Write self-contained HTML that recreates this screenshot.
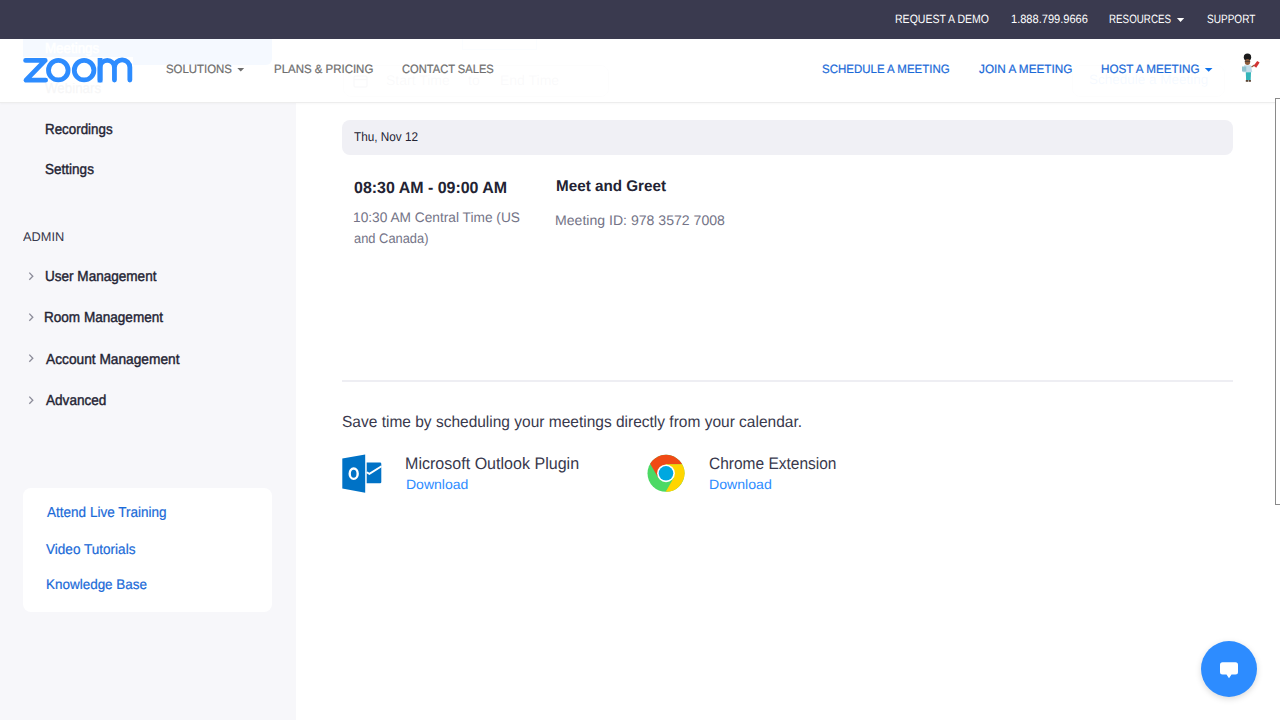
<!DOCTYPE html>
<html><head><meta charset="utf-8">
<style>
html,body{margin:0;padding:0;width:1280px;height:720px;overflow:hidden;background:#fff;font-family:"Liberation Sans",sans-serif;}
.a{position:absolute;white-space:nowrap;line-height:1;text-rendering:geometricPrecision;}
#side{position:absolute;left:0;top:0;width:295.5px;height:720px;background:#f7f7fa;}
#topbar{position:absolute;left:0;top:0;width:1280px;height:39px;background:#3a3a4f;}
#hdr{position:absolute;left:0;top:39px;width:1280px;height:63px;background:rgba(255,255,255,0.96);border-bottom:1px solid rgba(0,0,0,0.07);box-shadow:0 1px 2px rgba(0,0,0,0.03);}
.tb{color:#fff;font-size:12px;}
.nv{color:#6e6e6e;font-size:12px;}
.nb{color:#0e72ed;font-size:12px;}
.si{color:#232333;font-size:14px;font-weight:bold;}
.lk{color:#0e72ed;font-size:14px;}
</style></head><body>
<div id="side"></div>

<!-- ghost content under header -->
<div class="a" style="left:23.2px;top:30px;width:248.7px;height:35.4px;background:#0e72ed;border-radius:6px;"></div>
<div class="a" style="left:45px;top:41.6px;font-size:14.53px;color:#fff;transform:scaleX(0.92);transform-origin:0 0;-webkit-text-stroke:0.4px #fff;">Meetings</div>
<div class="a" style="left:45px;top:82.1px;font-size:14.53px;color:#232333;transform:scaleX(0.92);transform-origin:0 0;-webkit-text-stroke:0.4px #232333;">Webinars</div>

<div class="a" style="left:462px;top:20px;width:73px;height:29px;border:1px solid #8cc0ff;border-top:none;"></div>
<div class="a" style="left:343px;top:65px;width:264px;height:30px;border:1px solid #c9c9d1;border-radius:8px;"></div>
<svg class="a" style="left:353px;top:74px" width="15" height="14"><rect x="1" y="2" width="13" height="11" rx="1.5" fill="none" stroke="#747487" stroke-width="1.5"/><path d="M1 5.5 H14" stroke="#747487" stroke-width="1.5"/></svg>
<div class="a" style="left:386px;top:73px;font-size:14px;color:#747487;">Start Time</div>
<div class="a" style="left:468px;top:73px;font-size:14px;color:#747487;">to</div>
<div class="a" style="left:500px;top:73px;font-size:14px;color:#747487;">End Time</div>
<div class="a" style="left:1072px;top:65px;width:151px;height:30px;border:1px solid #c9c9d1;border-radius:8px;"></div>
<div class="a" style="left:1089px;top:73px;font-size:13.5px;color:#0e72ed;">Schedule a Meeting</div>

<!-- sidebar -->
<svg class="a" style="left:27px;top:271px" width="8" height="11"><path d="M2.3 1.6 L5.8 5.2 L2.3 8.8" fill="none" stroke="#8c8c99" stroke-width="1.3"/></svg>
<svg class="a" style="left:27px;top:312.2px" width="8" height="11"><path d="M2.3 1.6 L5.8 5.2 L2.3 8.8" fill="none" stroke="#8c8c99" stroke-width="1.3"/></svg>
<svg class="a" style="left:27px;top:353.4px" width="8" height="11"><path d="M2.3 1.6 L5.8 5.2 L2.3 8.8" fill="none" stroke="#8c8c99" stroke-width="1.3"/></svg>
<svg class="a" style="left:27px;top:394.6px" width="8" height="11"><path d="M2.3 1.6 L5.8 5.2 L2.3 8.8" fill="none" stroke="#8c8c99" stroke-width="1.3"/></svg>

<div class="a" style="left:23px;top:488px;width:249px;height:124px;background:#fff;border-radius:8px;"></div>

<!-- main -->
<div class="a" style="left:342px;top:120px;width:891px;height:34.6px;background:#f0f0f5;border-radius:8px;"></div>

<div class="a" style="left:342px;top:380px;width:891px;height:2px;background:#eeeef3;"></div>

<svg class="a" style="left:340px;top:452px" width="44" height="44" viewBox="0 0 44 44">
<polygon points="2.3,6.4 25.2,2.6 25.2,40.8 2.3,36.6" fill="#0072c6"/>
<ellipse cx="13.7" cy="21.7" rx="4" ry="5.2" fill="none" stroke="#fff" stroke-width="2.4"/>
<path d="M26.7 10.6 H40 a1.3 1.3 0 0 1 1.3 1.3 V29.9 a1.3 1.3 0 0 1 -1.3 1.3 H26.7 Z" fill="#0072c6"/>
<path d="M26.7 20.3 L29.4 21.9 L41.5 14.2" fill="none" stroke="#fff" stroke-width="1.9"/>
</svg>

<svg class="a" style="left:646px;top:453px" width="40" height="40" viewBox="0 0 40 40">
<circle cx="20" cy="20.3" r="18.5" fill="#4cd964"/>
<path d="M4.13 10.8 A18.5 18.5 0 0 1 36.16 11.3 L20 11.3 L12.21 24.8 Z" fill="#f04a15"/>
<path d="M36.16 11.3 A18.5 18.5 0 0 1 19.71 38.8 L27.79 24.8 L20 11.3 Z" fill="#ffd500"/>
<circle cx="20" cy="20.3" r="8.9" fill="#fff"/>
<circle cx="20" cy="20.3" r="7.3" fill="#00a8e0"/>
</svg>

<!-- clipped element at right edge -->

<!-- header -->
<div id="topbar"></div>
<svg class="a" style="left:1176px;top:16.8px" width="10" height="6"><path d="M0.9 1 H8.2 L4.55 4.95 Z" fill="#fff"/></svg>

<div id="hdr"></div>
<div class="a" style="left:23px;top:56.5px;width:110px;height:26px;background:#fff;"></div>
<svg class="a" style="left:0;top:0" width="140" height="100">
<g fill="none" stroke="#2d8cff" stroke-width="4.8" stroke-linejoin="round" stroke-linecap="round">
<path d="M25.6 60.4 H45.2 L26 80.2 H45.6"/>
<circle cx="58.3" cy="70.15" r="9.8"/>
<circle cx="84.1" cy="70.15" r="9.8"/>
<path d="M100.05 80 V67.5 A7.2 7.2 0 0 1 114.45 67.5 V80 M114.45 67.5 A7.6 7.6 0 0 1 129.85 67.5 V80"/>
<path d="M100.05 80 V60.4" stroke-linecap="square"/>
</g>
</svg>
<svg class="a" style="left:236px;top:67.3px" width="10" height="6"><path d="M1.3 1 H8.2 L4.75 4.6 Z" fill="#6e6e6e"/></svg>
<svg class="a" style="left:1204px;top:67.3px" width="10" height="6"><path d="M0.8 1 H8.5 L4.65 4.8 Z" fill="#0e72ed"/></svg>

<!-- avatar -->
<svg class="a" style="left:1236px;top:50px" width="26" height="36" viewBox="0 0 26 36">
<ellipse cx="11.5" cy="7.2" rx="3.7" ry="3.7" fill="#1c1c1c"/>
<ellipse cx="11.5" cy="12" rx="2.7" ry="3" fill="#8e5c3c"/>
<path d="M8.8 11.3 H14.2" stroke="#333" stroke-width="0.8"/>
<path d="M8 15.2 H15 L16.3 22.2 H7 Z" fill="#c2dcea"/>
<rect x="6" y="16.5" width="4.3" height="5" fill="#8fc3cf"/>
<path d="M15.5 17 L18.5 15" stroke="#8e5c3c" stroke-width="1.3"/>
<path d="M17.6 15.8 L21.2 11 L23.6 12.6 L20.2 17.8 Z" fill="#d23434"/>
<path d="M9.8 22.2 H15 L14.7 30.2 H10.1 Z" fill="#33b4b9"/>
<rect x="9.8" y="30" width="2.3" height="1.8" fill="#5a4535"/><rect x="12.6" y="30" width="2.3" height="1.8" fill="#5a4535"/>
</svg>

<!-- chat button -->
<div class="a" style="left:1201px;top:641px;width:56px;height:56px;border-radius:50%;background:#2d8cff;box-shadow:0 2px 6px rgba(0,0,0,0.15);"></div>
<svg class="a" style="left:1216px;top:658px" width="26" height="24" viewBox="0 0 26 24">
<path d="M6.5 4.2 H19.5 a2.5 2.5 0 0 1 2.5 2.5 V13.9 a2.5 2.5 0 0 1 -2.5 2.5 H15.5 L13 20.3 L10.5 16.4 H6.5 a2.5 2.5 0 0 1 -2.5 -2.5 V6.7 a2.5 2.5 0 0 1 2.5 -2.5 Z" fill="#fff"/>
</svg>
<div class="a" style="left:1275px;top:98px;width:20px;height:404.5px;border:1.3px solid #8a8a8a;background:#fff;"></div>
<div class="a" id="t1" style="left:894.85px;top:12.69px;font-size:12.06px;font-weight:400;color:#ffffff;transform:scaleX(0.8745);transform-origin:0 0;">REQUEST A DEMO</div>
<div class="a" id="t2" style="left:1010.94px;top:12.81px;font-size:12.06px;font-weight:400;color:#ffffff;transform:scaleX(0.9179);transform-origin:0 0;">1.888.799.9666</div>
<div class="a" id="t3" style="left:1109.20px;top:12.79px;font-size:12.06px;font-weight:400;color:#ffffff;transform:scaleX(0.8128);transform-origin:0 0;">RESOURCES</div>
<div class="a" id="t4" style="left:1207.00px;top:12.88px;font-size:12.06px;font-weight:400;color:#ffffff;transform:scaleX(0.8342);transform-origin:0 0;">SUPPORT</div>
<div class="a" id="h1" style="left:166.09px;top:62.90px;font-size:12.06px;font-weight:400;color:#6e6e6e;transform:scaleX(0.9474);transform-origin:0 0;-webkit-text-stroke:0.2px #6e6e6e;">SOLUTIONS</div>
<div class="a" id="h2" style="left:274.02px;top:62.96px;font-size:12.06px;font-weight:400;color:#6e6e6e;transform:scaleX(0.9508);transform-origin:0 0;-webkit-text-stroke:0.2px #6e6e6e;">PLANS &amp; PRICING</div>
<div class="a" id="h3" style="left:402.48px;top:63.04px;font-size:12.06px;font-weight:400;color:#6e6e6e;transform:scaleX(0.9240);transform-origin:0 0;-webkit-text-stroke:0.2px #6e6e6e;">CONTACT SALES</div>
<div class="a" id="h4" style="left:822.28px;top:62.82px;font-size:12.06px;font-weight:400;color:#1a6ad8;transform:scaleX(0.9533);transform-origin:0 0;-webkit-text-stroke:0.2px #1a6ad8;">SCHEDULE A MEETING</div>
<div class="a" id="h5" style="left:979.06px;top:62.87px;font-size:12.06px;font-weight:400;color:#1a6ad8;transform:scaleX(0.9757);transform-origin:0 0;-webkit-text-stroke:0.2px #1a6ad8;">JOIN A MEETING</div>
<div class="a" id="h6" style="left:1100.76px;top:63.12px;font-size:12.06px;font-weight:400;color:#1a6ad8;transform:scaleX(0.9702);transform-origin:0 0;-webkit-text-stroke:0.2px #1a6ad8;">HOST A MEETING</div>
<div class="a" id="s_rec" style="left:45.08px;top:122.57px;font-size:14.53px;font-weight:400;color:#232333;transform:scaleX(0.9208);transform-origin:0 0;-webkit-text-stroke:0.4px #232333;">Recordings</div>
<div class="a" id="s_set" style="left:45.17px;top:163.07px;font-size:14.53px;font-weight:400;color:#232333;transform:scaleX(0.9323);transform-origin:0 0;-webkit-text-stroke:0.4px #232333;">Settings</div>
<div class="a" id="s_adm" style="left:23.34px;top:231.24px;font-size:12.57px;font-weight:400;color:#39394d;transform:scaleX(1.0177);transform-origin:0 0;">ADMIN</div>
<div class="a" id="s_um" style="left:44.95px;top:270.18px;font-size:14.53px;font-weight:400;color:#232333;transform:scaleX(0.9332);transform-origin:0 0;-webkit-text-stroke:0.4px #232333;">User Management</div>
<div class="a" id="s_rm" style="left:44.12px;top:311.14px;font-size:14.53px;font-weight:400;color:#232333;transform:scaleX(0.9337);transform-origin:0 0;-webkit-text-stroke:0.4px #232333;">Room Management</div>
<div class="a" id="s_am" style="left:45.69px;top:352.98px;font-size:14.53px;font-weight:400;color:#232333;transform:scaleX(0.9455);transform-origin:0 0;-webkit-text-stroke:0.4px #232333;">Account Management</div>
<div class="a" id="s_adv" style="left:45.69px;top:393.56px;font-size:14.53px;font-weight:400;color:#232333;transform:scaleX(0.9356);transform-origin:0 0;-webkit-text-stroke:0.4px #232333;">Advanced</div>
<div class="a" id="c1" style="left:46.93px;top:506.30px;font-size:14.53px;font-weight:400;color:#1a6ad8;transform:scaleX(0.9326);transform-origin:0 0;-webkit-text-stroke:0.2px #1a6ad8;">Attend Live Training</div>
<div class="a" id="c2" style="left:46.10px;top:542.95px;font-size:14.24px;font-weight:400;color:#1a6ad8;transform:scaleX(0.9526);transform-origin:0 0;-webkit-text-stroke:0.2px #1a6ad8;">Video Tutorials</div>
<div class="a" id="c3" style="left:45.64px;top:577.92px;font-size:13.95px;font-weight:400;color:#1a6ad8;transform:scaleX(0.9658);transform-origin:0 0;-webkit-text-stroke:0.2px #1a6ad8;">Knowledge Base</div>
<div class="a" id="m_date" style="left:353.81px;top:131.03px;font-size:12.72px;font-weight:400;color:#232333;transform:scaleX(0.9234);transform-origin:0 0;">Thu, Nov 12</div>
<div class="a" id="m_time" style="left:354.07px;top:180.12px;font-size:16.28px;font-weight:700;color:#232333;transform:scaleX(0.9812);transform-origin:0 0;">08:30 AM - 09:00 AM</div>
<div class="a" id="m_tz1" style="left:353.48px;top:211.13px;font-size:13.81px;font-weight:400;color:#747487;transform:scaleX(0.9942);transform-origin:0 0;">10:30 AM Central Time (US</div>
<div class="a" id="m_tz2" style="left:354.34px;top:232.04px;font-size:13.81px;font-weight:400;color:#747487;transform:scaleX(0.9337);transform-origin:0 0;">and Canada)</div>
<div class="a" id="m_title" style="left:555.68px;top:178.78px;font-size:15.55px;font-weight:700;color:#232333;transform:scaleX(0.9798);transform-origin:0 0;">Meet and Greet</div>
<div class="a" id="m_id" style="left:555.23px;top:213.86px;font-size:13.95px;font-weight:400;color:#747487;transform:scaleX(1.0105);transform-origin:0 0;">Meeting ID: 978 3572 7008</div>
<div class="a" id="m_save" style="left:342.19px;top:414.78px;font-size:15.99px;font-weight:400;color:#39394d;transform:scaleX(0.9696);transform-origin:0 0;">Save time by scheduling your meetings directly from your calendar.</div>
<div class="a" id="m_op" style="left:404.91px;top:456.08px;font-size:16.57px;font-weight:400;color:#39394d;transform:scaleX(0.9700);transform-origin:0 0;">Microsoft Outlook Plugin</div>
<div class="a" id="m_dl1" style="left:405.81px;top:478.24px;font-size:13.59px;font-weight:400;color:#2d8cff;transform:scaleX(1.0324);transform-origin:0 0;">Download</div>
<div class="a" id="m_ce" style="left:708.81px;top:455.96px;font-size:16.57px;font-weight:400;color:#39394d;transform:scaleX(0.9357);transform-origin:0 0;">Chrome Extension</div>
<div class="a" id="m_dl2" style="left:708.58px;top:478.09px;font-size:13.59px;font-weight:400;color:#2d8cff;transform:scaleX(1.0387);transform-origin:0 0;">Download</div>
</body></html>
